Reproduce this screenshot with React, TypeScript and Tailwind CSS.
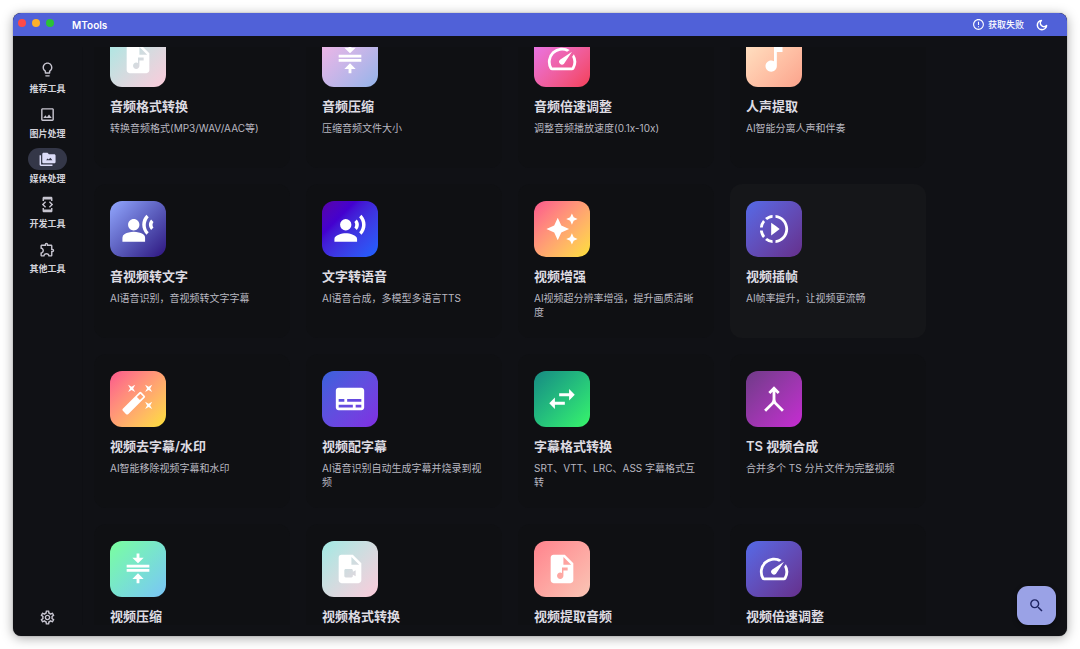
import { useLayoutEffect, useRef } from "react";
import type { ComponentType } from "react";
import {
  MdAudioFile,
  MdAutoAwesome,
  MdAutoFixHigh,
  MdCompress,
  MdErrorOutline,
  MdLightbulbOutline,
  MdMerge,
  MdMusicNote,
  MdOutlineDeveloperMode,
  MdOutlineExtension,
  MdOutlineImage,
  MdOutlineSettings,
  MdRecordVoiceOver,
  MdSearch,
  MdSlowMotionVideo,
  MdSpeed,
  MdSubtitles,
  MdSwapHoriz,
  MdTranscribe,
  MdVideoFile,
} from "react-icons/md";

type Icon = ComponentType<{ className?: string }>;

type NavItem = { label: string; icon: Icon; active?: boolean };

type Tool = {
  title: string;
  desc?: string;
  icon: Icon;
  gradient: string;
  highlighted?: boolean;
};

/* Stacked folders with a small landscape cut out of the front one. */
function MediaFolderIcon({ className }: { className?: string }) {
  return (
    <svg viewBox="0 0 24 24" fill="currentColor" className={className} aria-hidden="true">
      <path d="M2.900 6H.8v13.200c0 1.100.9 2 2 2H19v-2H2.900V6z" />
      <path
        fillRule="evenodd"
        d="M21.400 4.600H14l-2-2H6.600c-1.100 0-2 .9-2 2v10.800c0 1.100.9 2 2 2h14.800c1.100 0 2-.9 2-2V6.600c0-1.100-.9-2-2-2zM10 13l2.200-2.400 1.500 1.400 2.300-2.600 3 3.600z"
      />
    </svg>
  );
}

/* Outlined crescent, open towards the upper right. */
function MoonIcon({ className }: { className?: string }) {
  return (
    <svg
      viewBox="0 0 24 24"
      fill="none"
      stroke="currentColor"
      strokeWidth="2.6"
      strokeLinejoin="round"
      className={className}
      aria-hidden="true"
    >
      <path d="M11 4.200A7.900 7.900 0 1 0 19.800 13 5.900 5.900 0 0 1 11 4.200z" />
    </svg>
  );
}

const navItems: NavItem[] = [
  { label: "推荐工具", icon: MdLightbulbOutline },
  { label: "图片处理", icon: MdOutlineImage },
  { label: "媒体处理", icon: MediaFolderIcon, active: true },
  { label: "开发工具", icon: MdOutlineDeveloperMode },
  { label: "其他工具", icon: MdOutlineExtension },
];

const tools: Tool[] = [
  { title: "音频格式转换", desc: "转换音频格式(MP3/WAV/AAC等)", icon: MdAudioFile, gradient: "from-[#9feae4] to-[#fbcbdb]" },
  { title: "音频压缩", desc: "压缩音频文件大小", icon: MdCompress, gradient: "from-[#f9b5e6] to-[#93b4ea]" },
  { title: "音频倍速调整", desc: "调整音频播放速度(0.1x-10x)", icon: MdSpeed, gradient: "from-[#e878f8] to-[#f43e58]" },
  { title: "人声提取", desc: "AI智能分离人声和伴奏", icon: MdMusicNote, gradient: "from-[#ffe8c8] to-[#fba38c]" },
  { title: "音视频转文字", desc: "AI语音识别，音视频转文字字幕", icon: MdTranscribe, gradient: "from-[#93a8ff] to-[#2f107f]" },
  { title: "文字转语音", desc: "AI语音合成，多模型多语言TTS", icon: MdRecordVoiceOver, gradient: "from-[#5800a8] via-[#4400cf] via-30% to-[#1a62ff]" },
  { title: "视频增强", desc: "AI视频超分辨率增强，提升画质清晰度", icon: MdAutoAwesome, gradient: "from-[#fb558c] to-[#fce032]" },
  { title: "视频插帧", desc: "AI帧率提升，让视频更流畅", icon: MdSlowMotionVideo, gradient: "from-[#546ae8] to-[#652f8c]", highlighted: true },
  { title: "视频去字幕/水印", desc: "AI智能移除视频字幕和水印", icon: MdAutoFixHigh, gradient: "from-[#fb558c] to-[#fce032]" },
  { title: "视频配字幕", desc: "AI语音识别自动生成字幕并烧录到视频", icon: MdSubtitles, gradient: "from-[#3661dc] to-[#7f2de2]" },
  { title: "字幕格式转换", desc: "SRT、VTT、LRC、ASS 字幕格式互转", icon: MdSwapHoriz, gradient: "from-[#188a82] to-[#38f668]" },
  { title: "TS 视频合成", desc: "合并多个 TS 分片文件为完整视频", icon: MdMerge, gradient: "from-[#6f3a88] to-[#c62ad2]" },
  { title: "视频压缩", icon: MdCompress, gradient: "from-[#7aff9c] to-[#7ac4f6]" },
  { title: "视频格式转换", icon: MdVideoFile, gradient: "from-[#9feae4] to-[#fbcbdb]" },
  { title: "视频提取音频", icon: MdAudioFile, gradient: "from-[#ff828d] to-[#f9c5b5]" },
  { title: "视频倍速调整", icon: MdSpeed, gradient: "from-[#546ae8] to-[#652f8c]" },
];

const INITIAL_SCROLL = 33;

function TitleBar() {
  return (
    <header className="flex h-[23px] shrink-0 items-center bg-[#5061d8] pr-[18px] pl-[5px] text-white">
      <div className="flex gap-1.5 pb-1">
        <button type="button" aria-label="关闭" className="size-2 rounded-full bg-[#ff4a47]" />
        <button type="button" aria-label="最小化" className="size-2 rounded-full bg-[#fdb02a]" />
        <button type="button" aria-label="最大化" className="size-2 rounded-full bg-[#2ac336]" />
      </div>
      <h1 className="ml-[18px] text-[10px] leading-4 font-semibold">MTools</h1>
      <div className="ml-auto flex items-center gap-[11px]">
        <button type="button" className="flex items-center gap-[3px] text-[9px] leading-4 font-medium">
          <MdErrorOutline className="size-[13px]" />
          获取失败
        </button>
        <button type="button" aria-label="切换深色模式">
          <MoonIcon className="size-3.5" />
        </button>
      </div>
    </header>
  );
}

function SideNav() {
  return (
    <nav className="flex w-[69px] shrink-0 flex-col items-center pt-[22px] pb-2 text-[#c7c5d0]">
      <ul className="flex flex-col gap-2">
        {navItems.map(({ label, icon: Icon, active }) => (
          <li key={label}>
            <a
              href="#"
              aria-current={active ? "page" : undefined}
              className="flex flex-col items-center gap-[3px] text-[9px] leading-3 font-semibold"
            >
              <span
                className={
                  active
                    ? "flex h-[22px] w-[39px] items-center justify-center rounded-full bg-[#343748] text-[#dcdcf8]"
                    : "flex h-[22px] w-[39px] items-center justify-center rounded-full"
                }
              >
                <Icon className="size-[17px]" />
              </span>
              <span className="text-[#d2d1d9]">{label}</span>
            </a>
          </li>
        ))}
      </ul>
      <button type="button" aria-label="设置" className="mt-auto p-0.5">
        <MdOutlineSettings className="size-[17px]" />
      </button>
    </nav>
  );
}

function ToolCard({ title, desc, icon: Icon, gradient, highlighted }: Tool) {
  return (
    <li className="h-[154px] w-[196px]">
      <a
        href="#"
        className={
          highlighted
            ? "flex h-full flex-col rounded-xl bg-[#151619] px-4 pt-[17px]"
            : "flex h-full flex-col rounded-xl bg-[#0f1013] px-4 pt-[17px]"
        }
      >
        <span className={`flex size-14 shrink-0 items-center justify-center rounded-xl bg-linear-to-br text-white ${gradient}`}>
          <Icon className="size-[34px]" />
        </span>
        <h2 className="mt-[9px] text-[13px] leading-5 font-semibold text-[#dddbe2]">{title}</h2>
        {desc && <p className="mt-[5px] text-[10px] leading-[14px] text-[#b9b8c1]">{desc}</p>}
      </a>
    </li>
  );
}

export default function App() {
  const scroller = useRef<HTMLElement>(null);

  useLayoutEffect(() => {
    if (scroller.current) scroller.current.scrollTop = INITIAL_SCROLL;
  }, []);

  return (
    <div className="flex h-screen bg-white p-[13px] font-['Inter','Noto_Sans_CJK_SC',sans-serif]">
      <div className="relative flex min-w-0 flex-1 flex-col overflow-hidden rounded-lg bg-[#101115] shadow-[0_0_1px_rgba(0,0,0,0.6),0_2px_12px_rgba(0,0,0,0.35)]">
        <TitleBar />
        <div className="flex min-h-0 flex-1">
          <SideNav />
          <main
            ref={scroller}
            className="my-[11px] min-w-0 flex-1 overflow-y-auto border-l border-[#0e0f13] px-[11px] [scrollbar-width:none]"
          >
            <ul className="flex flex-wrap gap-4">
              {tools.map((tool) => (
                <ToolCard key={tool.title} {...tool} />
              ))}
            </ul>
          </main>
        </div>
        <button
          type="button"
          aria-label="搜索"
          className="absolute right-[11px] bottom-[11px] flex size-[39px] items-center justify-center rounded-[11px] bg-[#9aa2e6] text-[#1e2462] shadow-[0_2px_5px_rgba(0,0,0,0.4)]"
        >
          <MdSearch className="size-[17px]" />
        </button>
      </div>
    </div>
  );
}
